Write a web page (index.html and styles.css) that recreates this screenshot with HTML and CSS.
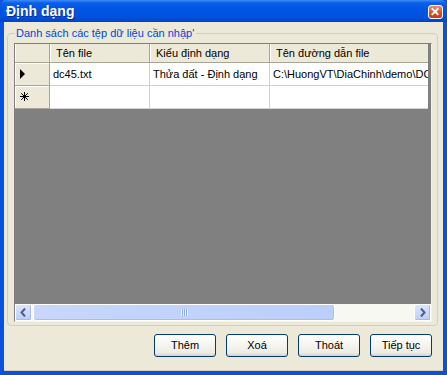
FILE: index.html
```html
<!DOCTYPE html>
<html>
<head>
<meta charset="utf-8">
<link rel="stylesheet" href="styles.css">
</head>
<body>
<div class="window">
  <div class="titlebar">
    <span class="title">Định dạng</span>
    <span class="close"><svg width="15" height="14" viewBox="0 0 15 14"><path d="M4 3.5 L10 9.5 M10 3.5 L4 9.5" stroke="#fff" stroke-width="2.2" stroke-linecap="square"/></svg></span>
  </div>
  <div class="body">
    <fieldset class="group">
      <legend class="legend">Danh sách các tệp dữ liệu cần nhập'</legend>
      <div class="grid">
        <div class="rows">
          <div class="row head">
            <div class="c rh"></div>
            <div class="c c1">Tên file</div>
            <div class="c c2">Kiểu định dạng</div>
            <div class="c c3">Tên đường dẫn file</div>
          </div>
          <div class="row data">
            <div class="c rh"><svg width="6" height="10" viewBox="0 0 6 10"><path d="M0 0 L5 5 L0 10 Z" fill="#000"/></svg></div>
            <div class="c c1">dc45.txt</div>
            <div class="c c2">Thửa đất - Định dạng</div>
            <div class="c c3">C:\HuongVT\DiaChinh\demo\DC</div>
          </div>
          <div class="row data">
            <div class="c rh"><svg width="9" height="9" viewBox="0 0 9 9"><path d="M4.5 0 V9 M0 4.5 H9 M1.2 1.2 L7.8 7.8 M7.8 1.2 L1.2 7.8" stroke="#000" stroke-width="1"/></svg></div>
            <div class="c c1"></div>
            <div class="c c2"></div>
            <div class="c c3"></div>
          </div>
          <div class="empty"></div>
        </div>
        <div class="hscroll">
          <div class="arrow"><svg width="7" height="9" viewBox="0 0 7 9"><path d="M5 0.5 L1.5 4.5 L5 8.5" stroke="#4d6185" stroke-width="2" fill="none"/></svg></div>
          <div class="thumb"><span class="grip"></span></div>
          <div class="track"></div>
          <div class="arrow"><svg width="7" height="9" viewBox="0 0 7 9"><path d="M2 0.5 L5.5 4.5 L2 8.5" stroke="#4d6185" stroke-width="2" fill="none"/></svg></div>
        </div>
      </div>
    </fieldset>
    <div class="buttons">
      <button class="btn">Thêm</button>
      <button class="btn">Xoá</button>
      <button class="btn">Thoát</button>
      <button class="btn">Tiếp tục</button>
    </div>
  </div>
</div>
</body>
</html>
```
FILE: styles.css
```css
html, body { margin: 0; padding: 0; }
body {
  width: 447px; height: 375px; overflow: hidden;
  font-family: "Liberation Sans", Arial, sans-serif;
  font-size: 11px;
}
.window {
  width: 447px; height: 375px;
  display: flex; flex-direction: column;
  background: #0a52dc;
  box-sizing: border-box;
}
.titlebar {
  height: 22px; flex: none;
  display: flex; align-items: center; justify-content: space-between;
  padding: 0 4px 0 6px;
  background: linear-gradient(to bottom, #3d8cf5 0px, #0a5ee8 3px, #0055e5 9px, #0052dd 17px, #0043c7 22px);
  border-radius: 6px 6px 0 0;
}
.title {
  color: #fff; font-weight: bold; font-size: 14px;
  text-shadow: 1px 1px 0 #0b2a8c;
}
.close {
  width: 15px; height: 14px; margin-top: 1px;
  border: 1px solid #fff; border-radius: 3px;
  background: linear-gradient(to bottom, #ec8a6a, #d9512a 55%, #c73c14);
  display: flex; align-items: center; justify-content: center;
  box-sizing: border-box;
}
.close svg { display: block; }
.body {
  flex: 1;
  margin: 0 4px 4px 4px;
  background: #ece9d8;
  display: flex; flex-direction: column;
  box-shadow: inset 0 -1px 0 #d8d2bd;
}
.group {
  margin: 4.5px 5px 0 3px;
  padding: 3px 5px 3px 6px;
  border: 1px solid #d0d0bf;
  border-radius: 4px;
  min-width: 0;
}
.legend {
  color: #0046d5;
  padding: 0 2px 0 1px;
  margin-left: 1px;
  line-height: 13px;
}
.grid {
  height: 279px;
  border: 1px solid #7f7f7f;
  border-right-color: #f4f3ee;
  border-bottom-color: #f4f3ee;
  display: flex; flex-direction: column;
  box-sizing: border-box;
  background: #808080;
  overflow: hidden;
}
.rows { flex: 1; display: flex; flex-direction: column; overflow: hidden; }
.row { display: flex; flex: none; }
.c {
  box-sizing: border-box; flex: none;
  padding-left: 3px;
  display: flex; align-items: center;
  white-space: nowrap; overflow: hidden;
  color: #000;
}
.rh { width: 35px; }
.c1 { width: 100px; }
.c2 { width: 120px; }
.c3 { width: 158px; }
.head { height: 19px; }
.head .c {
  background: #ece9d8;
  border-right: 1px solid #a7a595;
  box-shadow: inset 1px 0 0 #fff;
  border-bottom: 1px solid #a7a595;
  padding-left: 6px;
}
.head .rh { padding-left: 0; }
.head .c3 { border-right: none; }
.data { height: 23px; }
.data .c {
  background: #fff;
  border-right: 1px solid #d6d3ce;
  border-bottom: 1px solid #d6d3ce;
}
.data .c3 { border-right: none; }
.data .rh {
  background: #ece9d8;
  border-right: 1px solid #a7a595;
  border-bottom: 1px solid #a7a595;
  box-shadow: inset 1px 1px 0 #fff;
  padding-left: 5px;
}
.data .rh svg { display: block; }
.empty { flex: 1; background: #808080; }
.hscroll {
  height: 17px; flex: none;
  display: flex;
  background: #f8f8f3;
}
.arrow {
  width: 17px; height: 17px; box-sizing: border-box;
  border: 1px solid #fff;
  border-radius: 2px;
  background: linear-gradient(to bottom, #dbe6fd, #bccefa);
  display: flex; align-items: center; justify-content: center;
  box-shadow: inset -1px -1px 0 #aab9e5;
}
.thumb {
  width: 302px; height: 17px; box-sizing: border-box;
  margin-left: 1px;
  border: 1px solid #fff;
  border-radius: 3px;
  background: linear-gradient(to right, #c7d7fd, #bbcffb);
  box-shadow: inset 0 -1px 0 #a8bdf0, inset -1px 0 0 #a8bdf0;
  display: flex; align-items: center; justify-content: center;
}
.grip {
  width: 7px; height: 7px;
  background: repeating-linear-gradient(to right, #eef4fe 0 1px, #8caef0 1px 2px);
}
.track { flex: 1; }
.buttons {
  display: flex; justify-content: flex-end; gap: 10px;
  margin: 8px 11px 0 0;
}
.btn {
  width: 62px; height: 23px;
  font-family: "Liberation Sans", Arial, sans-serif;
  font-size: 11px; color: #000;
  border: 1px solid #003c74;
  border-radius: 3px;
  background: linear-gradient(to bottom, #ffffff 0%, #f7f6f1 40%, #ecebe4 85%, #d6d0c5 100%);
  padding: 0;
}
```
